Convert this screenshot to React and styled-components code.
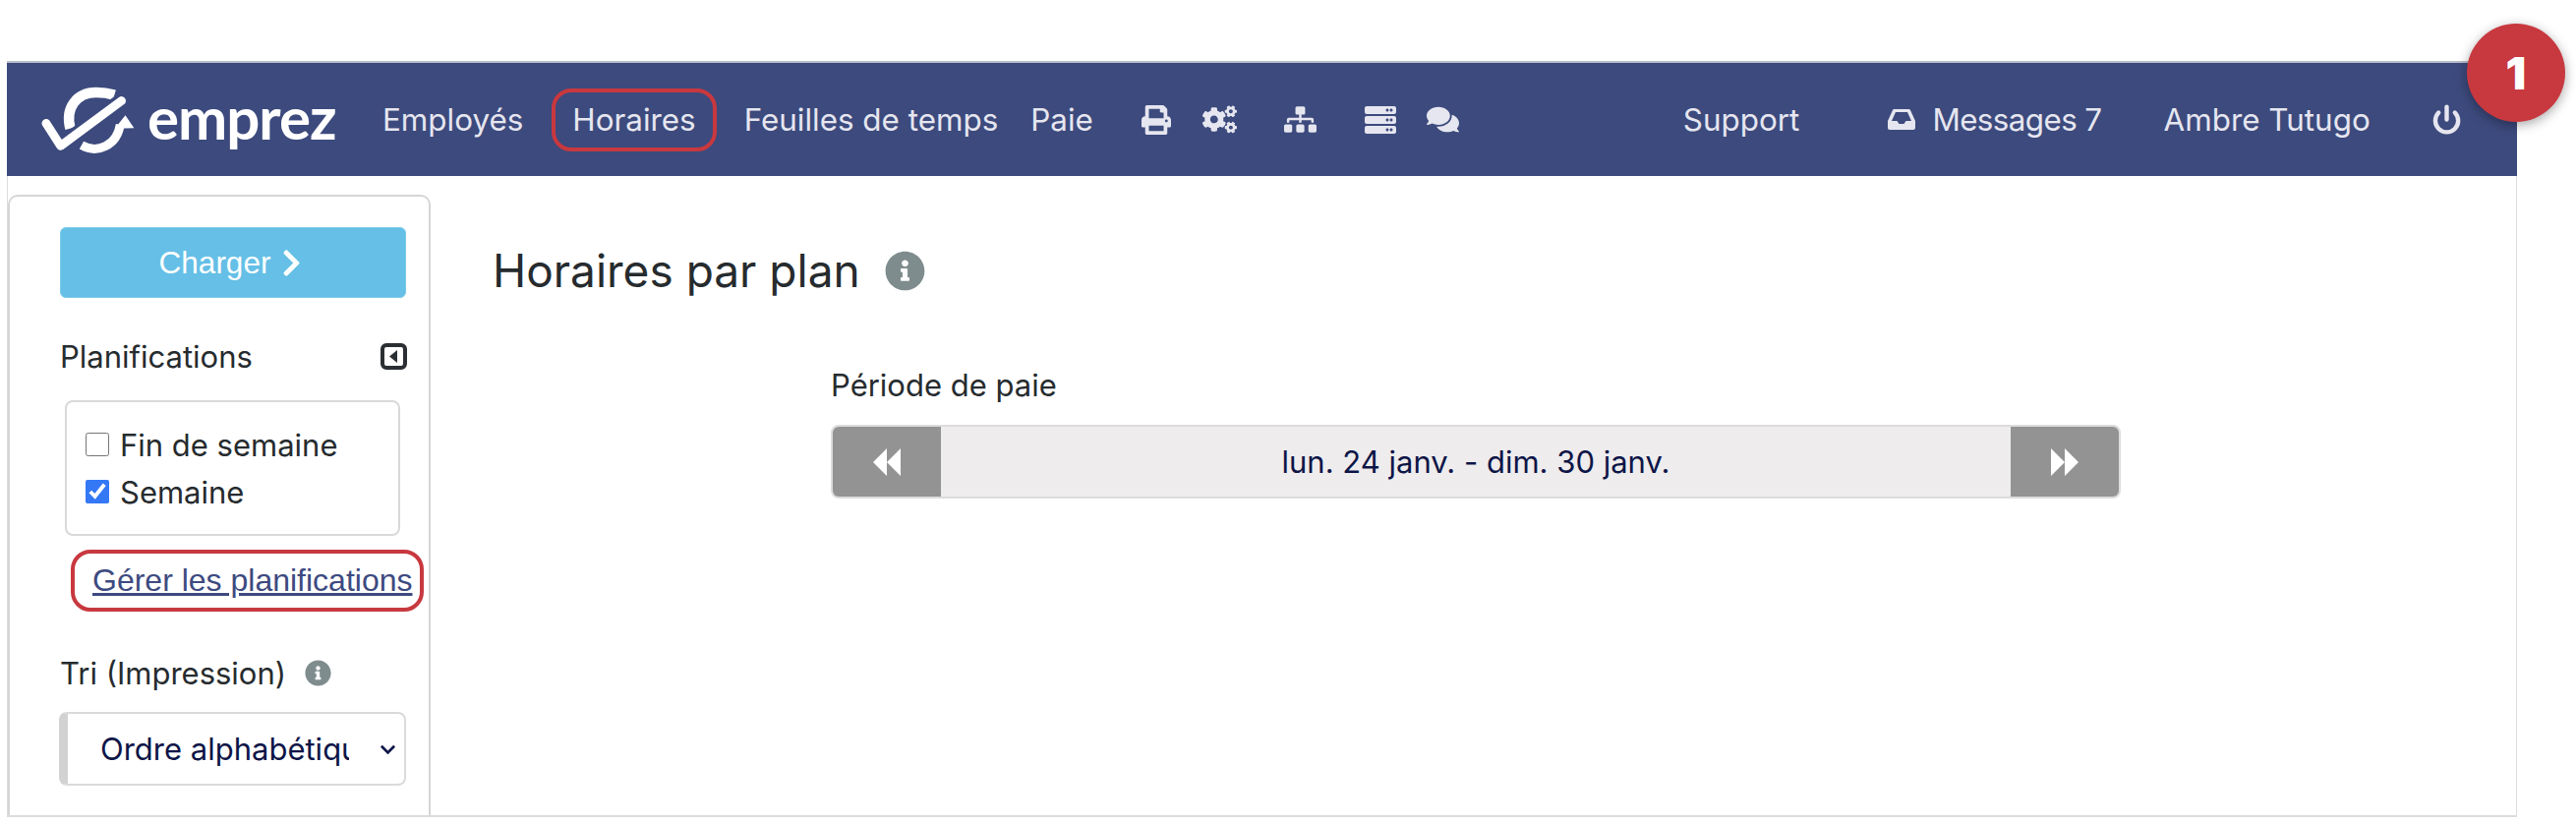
import styled, { createGlobalStyle } from "styled-components";
import {
  FaChevronDown,
  FaChevronRight,
  FaCogs,
  FaComments,
  FaInfoCircle,
  FaPrint,
  FaServer,
  FaSitemap,
} from "react-icons/fa";
import { Power } from "lucide-react";

const GlobalStyle = createGlobalStyle`
  html, body {
    margin: 0;
    background: #fff;
    font-family: Inter, "Liberation Sans", sans-serif;
    color: #262b2e;
  }
`;

const Frame = styled.div`
  position: relative;
  box-sizing: border-box;
  width: 2553px;
  margin: 62px 0 0 7px;
`;

const Nav = styled.nav`
  display: flex;
  align-items: center;
  box-sizing: border-box;
  height: 117px;
  padding-left: 35px;
  background: #3c4a7d;
  border-top: 2px solid #b9bdc8;
  color: #e6e6f0;
  font-size: 31.4px;
`;

const LogoBox = styled.div`
  display: flex;
  align-items: center;
  gap: 13px;
  width: 347px;
  color: #fff;
`;

const Wordmark = styled.span`
  font-family: Lato, sans-serif;
  font-size: 60px;
  font-weight: 700;
  line-height: 1;
  letter-spacing: -1px;
  margin-top: -5px;
`;

const NavLink = styled.a`
  display: inline-flex;
  align-items: center;
  margin-left: ${(p) => p.$ml || 0}px;
  white-space: nowrap;
`;

const BoxedNavLink = styled(NavLink)`
  box-sizing: border-box;
  height: 64px;
  padding: 0 17px;
  border: 4px solid #c8383f;
  border-radius: 20px;
`;

const MessagesLink = styled(NavLink)`
  letter-spacing: -0.6px;
`;

const NavIcon = styled.span`
  display: inline-flex;
  margin-left: ${(p) => p.$ml}px;
  font-size: ${(p) => p.$size}px;
`;

const Badge = styled.div`
  position: absolute;
  top: -38px;
  right: -49px;
  display: flex;
  align-items: center;
  justify-content: center;
  width: 100px;
  height: 100px;
  border-radius: 50%;
  background: #c8383f;
  box-shadow: 0 3px 12px rgba(0, 0, 0, 0.35);
  color: #fff;
  font-size: 46px;
  font-weight: 900;
`;

const Main = styled.main`
  display: flex;
  box-sizing: border-box;
  height: 652px;
  border-right: 1px solid #dcdcdc;
  border-bottom: 2px solid #dcdcdc;
  border-left: 1px solid #dcdcdc;
`;

const Sidebar = styled.aside`
  box-sizing: border-box;
  width: 430px;
  margin-top: 19px;
  padding: 31px 24px 0 51px;
  border: 2px solid #d6d6d6;
  border-bottom: 0;
  border-radius: 10px 10px 0 0;
`;

const LoadButton = styled.button`
  display: flex;
  align-items: center;
  justify-content: center;
  gap: 6px;
  width: 352px;
  height: 72px;
  padding: 0;
  border: 1px solid #7ccbea;
  border-radius: 6px;
  background: #65bfe6;
  color: #fff;
  font-family: "Liberation Sans", sans-serif;
  font-size: 31.5px;
`;

const SideHeading = styled.div`
  display: flex;
  align-items: center;
  justify-content: space-between;
  width: 353px;
  height: 40px;
  margin-top: 39px;
  font-size: 31px;
`;

const PlanBox = styled.div`
  box-sizing: border-box;
  width: 341px;
  height: 138px;
  margin: 25px 0 0 5px;
  padding: 19px 0 0 19px;
  border: 2px solid #d9d9d9;
  border-radius: 8px;
`;

const PlanRow = styled.label`
  display: flex;
  align-items: center;
  gap: 11px;
  height: 48px;
  font-size: 31px;
`;

const PlanCheck = styled.input`
  width: 24px;
  height: 24px;
  margin: 0;
  accent-color: #3478f6;
`;

const ManageLink = styled.a`
  display: block;
  box-sizing: border-box;
  width: 359px;
  height: 63px;
  margin: 14px 0 0 11px;
  padding-left: 18px;
  border: 4px solid #c8383f;
  border-radius: 20px;
  color: #3d4a80;
  font-family: "Liberation Sans", sans-serif;
  font-size: 32px;
  line-height: 54px;
  text-decoration: underline;
  white-space: nowrap;
`;

const SortLabel = styled.div`
  display: flex;
  align-items: center;
  gap: 19px;
  height: 40px;
  margin-top: 42px;
  font-size: 31px;
`;

const InfoIcon = styled(FaInfoCircle)`
  color: #7f8c8d;
  font-size: ${(p) => p.$size}px;
`;

const SelectWrap = styled.div`
  position: relative;
  width: 353px;
  margin: 20px 0 0 -1px;
  color: #0d1547;
`;

const SortSelect = styled.select`
  display: block;
  box-sizing: border-box;
  width: 100%;
  height: 75px;
  padding: 0 56px 0 33px;
  border: 2px solid #dadada;
  border-left: 9px solid #d2d2d2;
  border-radius: 8px;
  background: #fff;
  color: inherit;
  font-family: Inter, sans-serif;
  font-size: 31px;
  appearance: none;
`;

const SelectArrow = styled(FaChevronDown)`
  position: absolute;
  top: 30px;
  right: 10px;
  font-size: 17px;
  pointer-events: none;
`;

const Content = styled.section`
  flex: 1;
  padding-left: 63px;
`;

const Title = styled.h1`
  display: flex;
  align-items: center;
  gap: 25px;
  height: 60px;
  margin: 66px 0 0;
  font-size: 46px;
  font-weight: 400;
`;

const PeriodBlock = styled.div`
  width: 1312px;
  margin: 67px 0 0 344px;
`;

const PeriodLabel = styled.div`
  height: 40px;
  font-size: 31px;
  line-height: 40px;
`;

const PeriodBar = styled.div`
  display: flex;
  box-sizing: border-box;
  height: 75px;
  margin-top: 20px;
  overflow: hidden;
  border: 2px solid #dcdcdc;
  border-radius: 8px;
  background: #eeeced;
`;

const PeriodStep = styled.button`
  display: flex;
  flex: none;
  align-items: center;
  justify-content: center;
  width: 110px;
  padding: 0;
  border: 0;
  background: #939393;
`;

const PeriodText = styled.div`
  display: flex;
  flex: 1;
  align-items: center;
  justify-content: center;
  color: #0d1547;
  font-size: 31px;
`;

const LogoMark = () => (
  <svg width="95" height="68" viewBox="65 55 290 205" fill="none">
    <path d="M155 184 C138 120 175 72 235 72 C255 72 272 74 292 80" stroke="#fff" strokeWidth="32" />
    <path d="M190 236 C240 264 300 236 310 172" stroke="#fff" strokeWidth="27" />
    <path d="M326 143 L353 183 L293 184 Z" fill="#fff" />
    <path d="M78 168 L124 238 L312 98" stroke="#3c4a7d" strokeWidth="46" strokeLinejoin="round" />
    <path d="M80 168 L125 238 L314 98" stroke="#fff" strokeWidth="27" strokeLinecap="round" strokeLinejoin="round" />
  </svg>
);

const InboxIcon = () => (
  <svg width="28" height="21" viewBox="0 0 28 21" fill="#e6e6f0">
    <path
      fillRule="evenodd"
      d="M7 0 H21 A2 2 0 0 1 23 1 L28 12 V19 A2 2 0 0 1 26 21 H2 A2 2 0 0 1 0 19 V12 L5 1 A2 2 0 0 1 7 0 Z M8 3 L4 12 H9.5 L11.5 15 H16.5 L18.5 12 H24 L20 3 Z"
    />
  </svg>
);

const CollapseIcon = () => (
  <svg width="27" height="27" viewBox="0 0 27 27" fill="none">
    <rect x="2" y="2" width="23" height="23" rx="4" stroke="#2b2f33" strokeWidth="4" />
    <path d="M17 7 V20 L9 13.5 Z" fill="#2b2f33" />
  </svg>
);

const StepArrows = ({ back }) => (
  <svg width="28" height="28" viewBox="0 0 28 28" fill="#fff">
    <path d={back ? "M14 0 V28 L0 14 Z M28 0 V28 L14 14 Z" : "M0 0 V28 L14 14 Z M14 0 V28 L28 14 Z"} />
  </svg>
);

const App = () => (
  <>
    <GlobalStyle />
    <Frame>
      <Nav>
        <LogoBox>
          <LogoMark />
          <Wordmark>emprez</Wordmark>
        </LogoBox>
        <NavLink>Employés</NavLink>
        <BoxedNavLink $ml={29}>Horaires</BoxedNavLink>
        <NavLink $ml={28}>Feuilles de temps</NavLink>
        <NavLink $ml={33}>Paie</NavLink>
        <NavIcon $ml={49} $size={30}><FaPrint /></NavIcon>
        <NavIcon $ml={32} $size={35}><FaCogs /></NavIcon>
        <NavIcon $ml={48} $size={33}><FaSitemap /></NavIcon>
        <NavIcon $ml={49} $size={32}><FaServer /></NavIcon>
        <NavIcon $ml={31} $size={33}><FaComments /></NavIcon>
        <NavLink $ml={228}>Support</NavLink>
        <NavIcon $ml={90} $size={28}><InboxIcon /></NavIcon>
        <MessagesLink $ml={17}>Messages 7</MessagesLink>
        <NavLink $ml={63}>Ambre Tutugo</NavLink>
        <NavIcon $ml={62} $size={31}><Power size={31} strokeWidth={3.4} /></NavIcon>
      </Nav>
      <Badge>1</Badge>
      <Main>
        <Sidebar>
          <LoadButton>
            Charger <FaChevronRight size={31} />
          </LoadButton>
          <SideHeading>
            Planifications
            <CollapseIcon />
          </SideHeading>
          <PlanBox>
            <PlanRow>
              <PlanCheck type="checkbox" />
              Fin de semaine
            </PlanRow>
            <PlanRow>
              <PlanCheck type="checkbox" defaultChecked />
              Semaine
            </PlanRow>
          </PlanBox>
          <ManageLink href="#">Gérer les planifications</ManageLink>
          <SortLabel>
            Tri (Impression)
            <InfoIcon $size={27} />
          </SortLabel>
          <SelectWrap>
            <SortSelect defaultValue="alpha">
              <option value="alpha">Ordre alphabétique</option>
              <option value="emp">Numéro d'employé</option>
            </SortSelect>
            <SelectArrow />
          </SelectWrap>
        </Sidebar>
        <Content>
          <Title>
            Horaires par plan
            <InfoIcon $size={41} />
          </Title>
          <PeriodBlock>
            <PeriodLabel>Période de paie</PeriodLabel>
            <PeriodBar>
              <PeriodStep><StepArrows back /></PeriodStep>
              <PeriodText>lun. 24 janv. - dim. 30 janv.</PeriodText>
              <PeriodStep><StepArrows /></PeriodStep>
            </PeriodBar>
          </PeriodBlock>
        </Content>
      </Main>
    </Frame>
  </>
);

export default App;
